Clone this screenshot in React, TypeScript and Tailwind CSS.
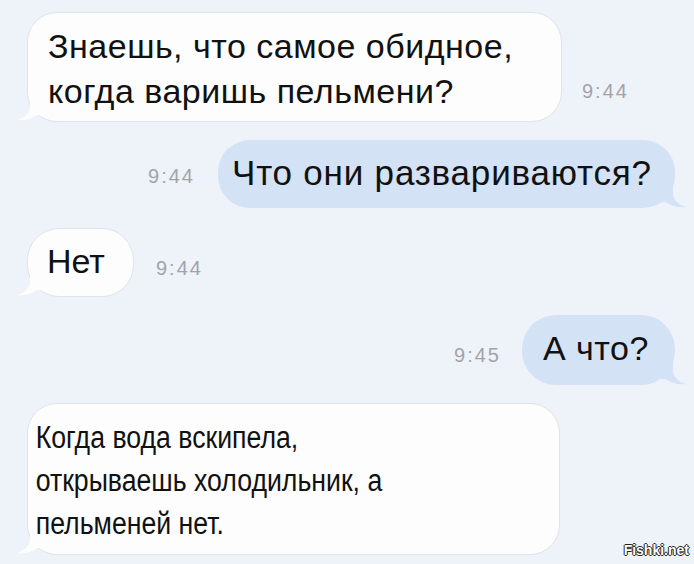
const font = "font-['Liberation_Sans',Arial,sans-serif]";

function TailLeft({ fill }: { fill: string }) {
  return (
    <svg
      className="absolute -left-[12px] bottom-0"
      width="26"
      height="26"
      viewBox="0 0 26 26"
    >
      <path
        d="M14 0 L14 12 C14 18 8 23 1 25 C9 26 16 24 21 20 L26 20 L26 0 Z"
        fill={fill}
      />
    </svg>
  );
}

function TailRight({ fill }: { fill: string }) {
  return (
    <svg
      className="absolute -right-[12px] bottom-0"
      width="26"
      height="26"
      viewBox="0 0 26 26"
    >
      <path
        d="M12 0 L12 12 C12 18 18 23 25 25 C17 26 10 24 5 20 L0 20 L0 0 Z"
        fill={fill}
      />
    </svg>
  );
}

function Time({ t }: { t: string }) {
  return (
    <span className={`${font} text-[20px] tracking-[2px] text-[#a2a4a8]`}>
      {t}
    </span>
  );
}

export default function App() {
  return (
    <div className={`relative w-[694px] h-[564px] overflow-hidden bg-[#eef2f9] ${font}`}>
      <div className="flex flex-col gap-[18px] pt-[12px] pl-[27px] pr-[19px]">
        {/* 1 */}
        <div className="flex items-end gap-[20px]">
          <div className="relative w-[535px] h-[110px] rounded-[30px] bg-[#fdfdfd] border border-[#dfe3ea]">
            <TailLeft fill="#fdfdfd" />
            <div className="relative pl-[20px] pt-[11px] text-[34px] leading-[45px] tracking-[0.5px] text-[#111]">
              Знаешь, что самое обидное,
              <br />
              когда варишь пельмени?
            </div>
          </div>
          <div className="pb-[16px]">
            <Time t="9:44" />
          </div>
        </div>

        {/* 2 */}
        <div className="flex items-center justify-end gap-[23px]">
          <div className="pt-[4px]">
            <Time t="9:44" />
          </div>
          <div className="relative w-[457px] h-[68px] rounded-[32px] bg-[#d4e2f5]">
            <TailRight fill="#d4e2f5" />
            <div className="relative pl-[14px] pt-[10px] text-[35px] leading-[45px] tracking-[0.8px] text-[#111]">
              Что они развариваются?
            </div>
          </div>
        </div>

        {/* 3 */}
        <div className="flex items-center gap-[22px] mt-[2px]">
          <div className="relative w-[107px] h-[69px] rounded-[32px] bg-[#fdfdfd] border border-[#dfe3ea]">
            <TailLeft fill="#fdfdfd" />
            <div className="relative pl-[19px] pt-[10px] text-[34px] leading-[45px] text-[#111]">
              Нет
            </div>
          </div>
          <div className="pt-[10px]">
            <Time t="9:44" />
          </div>
        </div>

        {/* 4 */}
        <div className="flex items-center justify-end gap-[21px]">
          <div className="pt-[10px]">
            <Time t="9:45" />
          </div>
          <div className="relative w-[153px] h-[70px] rounded-[34px] bg-[#d4e2f5]">
            <TailRight fill="#d4e2f5" />
            <div className="relative pl-[21px] pt-[11px] text-[34px] leading-[45px] tracking-[0.5px] text-[#111]">
              А что?
            </div>
          </div>
        </div>

        {/* 5 */}
        <div className="flex">
          <div className="relative w-[533px] h-[152px] rounded-[30px] bg-[#fdfdfd] border border-[#dfe3ea]">
            <TailLeft fill="#fdfdfd" />
            <div className="relative pl-[9px] pt-[12px] text-[31px] leading-[43px] text-[#111] origin-left scale-x-[0.86] whitespace-nowrap">
              Когда вода вскипела,
              <br />
              открываешь холодильник, а
              <br />
              пельменей нет.
            </div>
          </div>
        </div>
      </div>

      <div className="absolute right-[5px] bottom-[7px] text-[14px] font-bold leading-none text-white [text-shadow:-1px_0_#222,1px_0_#222,0_-1px_#222,0_1px_#222]">
        Fishki.net
      </div>
    </div>
  );
}
